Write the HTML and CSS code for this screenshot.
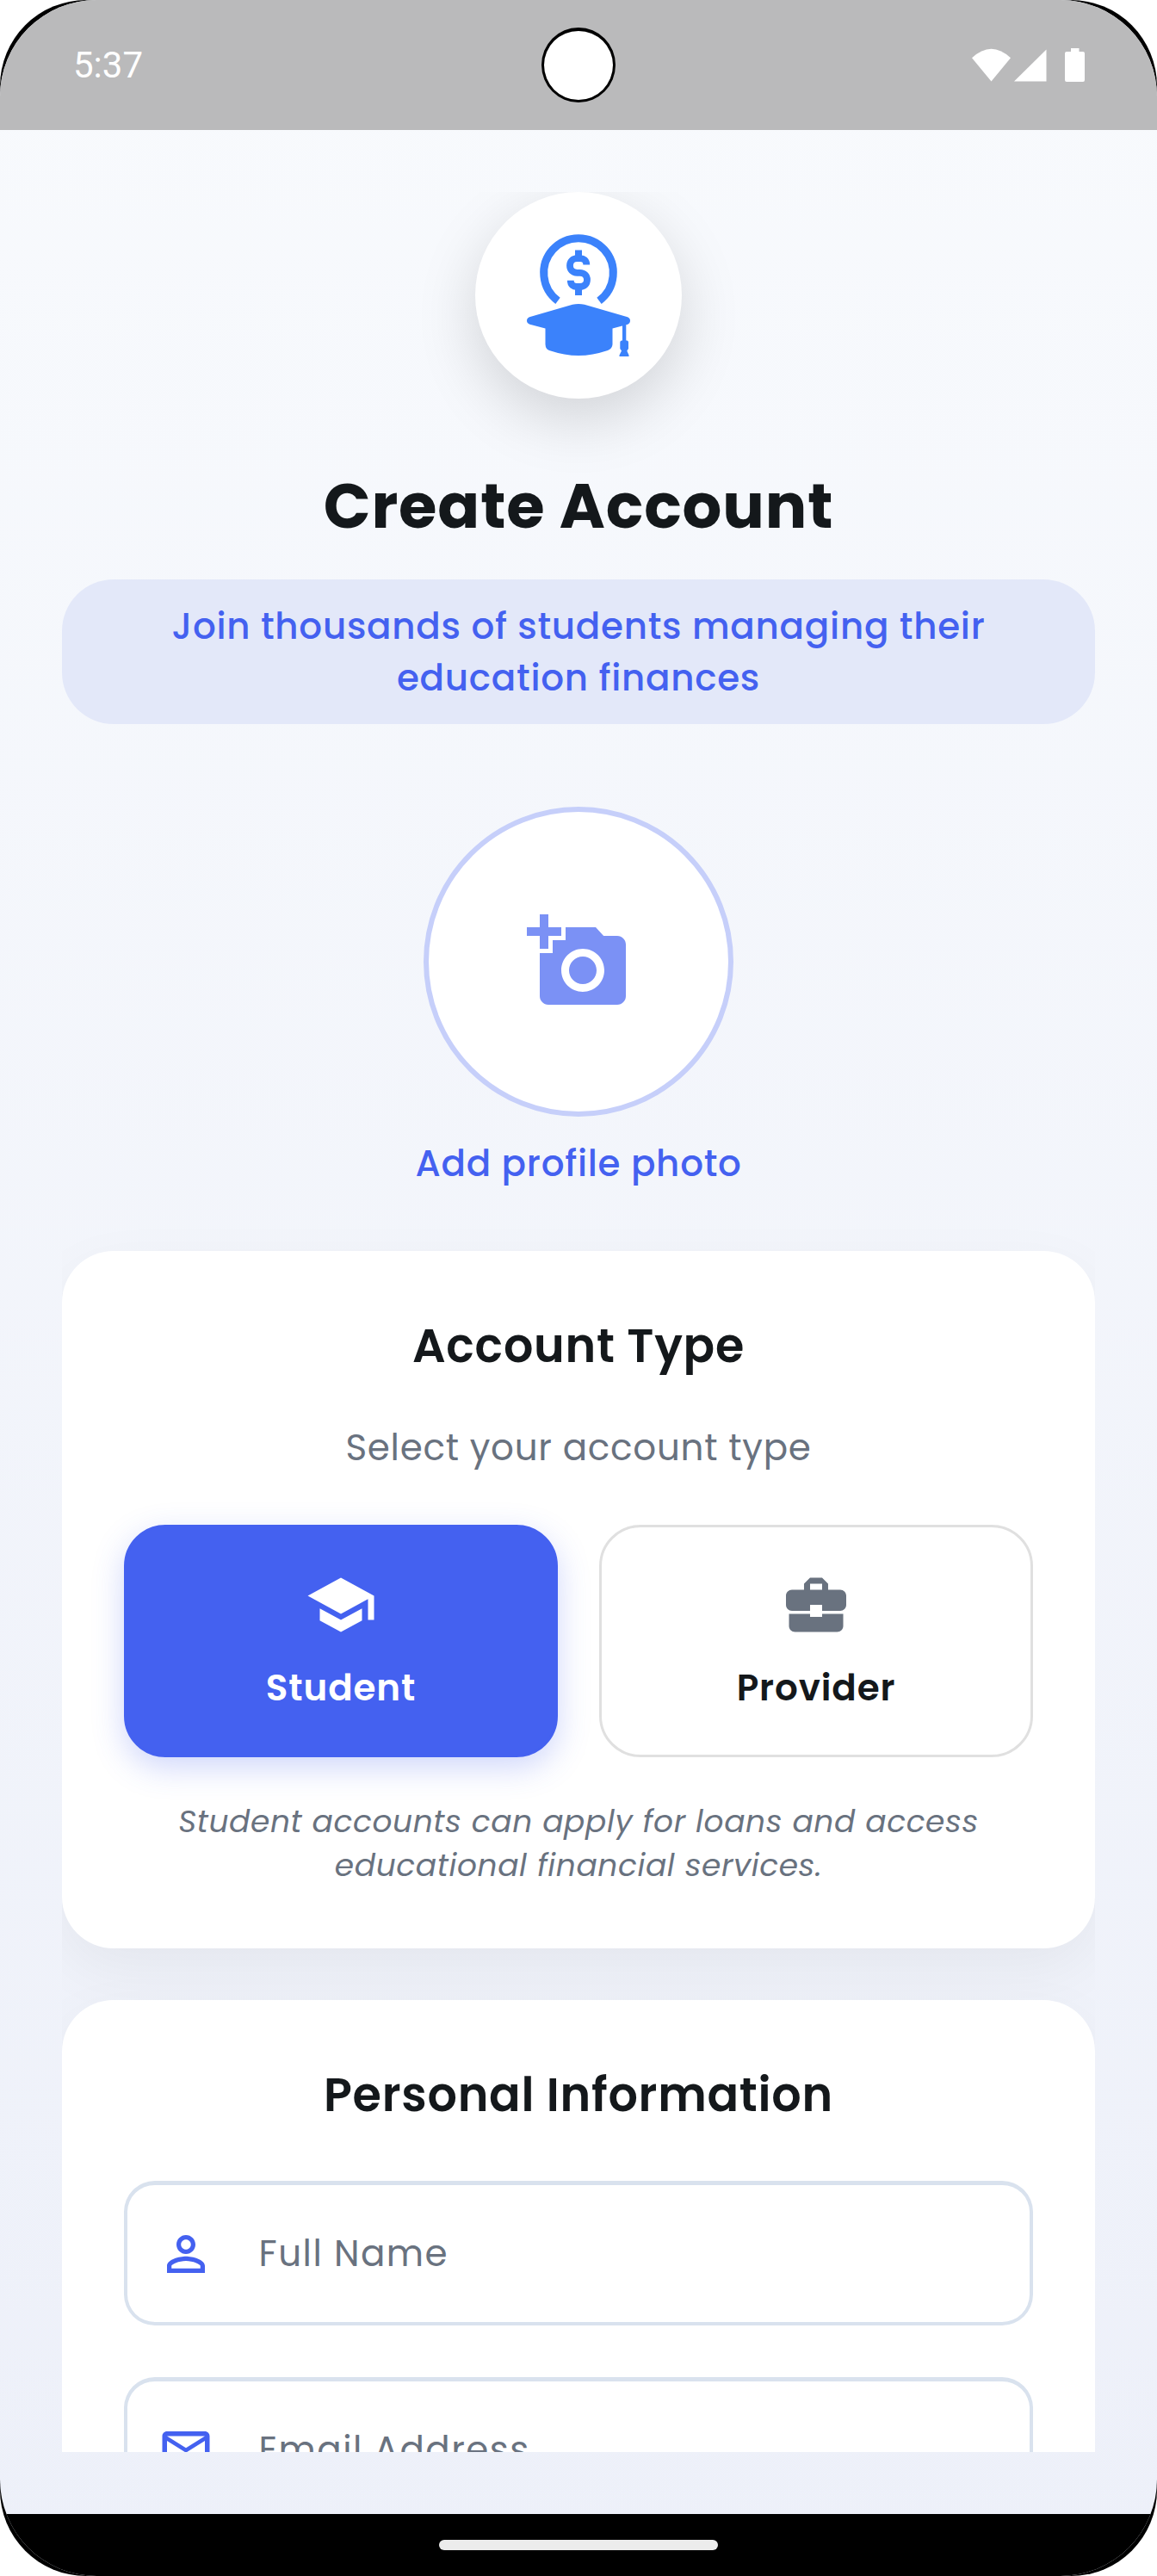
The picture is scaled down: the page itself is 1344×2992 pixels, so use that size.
FILE: index.html
```html
<!DOCTYPE html>
<html lang="en">
<head>
<meta charset="utf-8">
<title>Create Account</title>
<link rel="stylesheet" href="styles.css">
</head>
<body>
<div class="device">
  <div class="screen">
    <header class="status">
      <span class="clock">5:37</span>
      <span class="camera"></span>
      <svg class="status-icons" viewBox="0 0 132 40" fill="#fff">
        <path d="M0 11.300Q22.500-9.800 45 11.300L22.500 38.500Z"/>
        <path d="M86.500 1.500V38.500H49Z"/>
        <path d="M115 0h9.500v4h4.500a2 2 0 0 1 2 2v31a2 2 0 0 1-2 2h-19a2 2 0 0 1-2-2V6a2 2 0 0 1 2-2h5z"/>
      </svg>
    </header>
    <main class="scroller">
      <div class="logo">
        <svg viewBox="12 13 240 240" fill="none" stroke="#3b82fb">
          <path d="M108 139.300A40.300 40.300 0 1 1 156 139.300" stroke-width="9"/>
          <path d="M141.300 97.500C141.300 92.500 138 90.200 134 90.200H130.500C125 90.200 122 94 122 98.500S125 106.800 130.500 106.800H133.500C139 106.800 142 110.500 142 115S139 123 133.500 123H130C126 123 122.800 121 122.800 115.800" stroke-width="7.800"/>
          <path d="M132 80.500V90M132 123V133" stroke-width="8"/>
          <path fill="#3b82fb" stroke="none" d="M125 143.800Q132 142.200 139 143.800L189 158.300Q192 159.500 192 162.500Q192 165.800 188.500 167L171.500 171.500V190Q171.200 195 166 197Q148 203 132 203Q116 203 98 197Q93.800 195.500 93.500 190V171.500L75.500 166.800Q72 165.500 72 162.500Q72 159.500 75 158.300ZM183 166H187.300V185.500H188.500Q190 185.800 190 187.500V195L188.300 197.500L190.500 202.500V204H179.500V202.500L182 197.500L180.300 195V187.500Q180.300 185.800 182 185.500H183Z"/>
        </svg>
      </div>
      <h1 class="title">Create Account</h1>
      <p class="pill">Join thousands of students managing their<br>education finances</p>
      <div class="avatar">
        <svg viewBox="0 0 24 24" fill="#7b91f5"><path d="M3 4V1h2v3h3v2H5v3H3V6H0V4h3zm3 6V7h3V4h7l1.830 2H21c1.100 0 2 .9 2 2v12c0 1.100-.9 2-2 2H5c-1.100 0-2-.9-2-2V10h3zm7 9c2.760 0 5-2.240 5-5s-2.240-5-5-5-5 2.240-5 5 2.240 5 5 5zm-3.200-5c0 1.770 1.430 3.200 3.200 3.200s3.200-1.430 3.200-3.200-1.430-3.200-3.200-3.200-3.200 1.430-3.200 3.200z"/></svg>
      </div>
      <p class="photo-label">Add profile photo</p>

      <section class="card">
        <h2 class="card-title">Account Type</h2>
        <p class="card-sub">Select your account type</p>
        <div class="choices">
          <div class="choice selected">
            <svg viewBox="0 0 24 24" fill="#fff"><path d="M5 13.180v4L12 21l7-3.820v-4L12 17l-7-3.820zM12 3L1 9l11 6 9-4.910V17h2V9L12 3z"/></svg>
            <span>Student</span>
          </div>
          <div class="choice">
            <svg viewBox="0 0 24 24" fill="#69727f"><path d="M10 16v-1H3.010L3 19c0 1.110.89 2 2 2h14c1.110 0 2-.89 2-2v-4h-7v1h-4zm10-9h-4.010V5l-2-2h-4l-2 2v2H4c-1.100 0-2 .9-2 2v3c0 1.110.89 2 2 2h6v-2h4v2h6c1.100 0 2-.9 2-2V9c0-1.100-.9-2-2-2zm-6 0h-4V5h4v2z"/></svg>
            <span>Provider</span>
          </div>
        </div>
        <p class="note">Student accounts can apply for loans and access<br>educational financial services.</p>
      </section>

      <section class="card">
        <h2 class="card-title">Personal Information</h2>
        <div class="fields">
          <div class="field">
            <svg viewBox="0 0 24 24" fill="#4461f0"><path d="M12 5.900c1.160 0 2.100.94 2.100 2.100s-.94 2.100-2.100 2.100S9.900 9.160 9.900 8s.94-2.100 2.100-2.100m0 9c2.970 0 6.100 1.460 6.100 2.100v1.100H5.900V17c0-.64 3.130-2.100 6.100-2.100M12 4C9.790 4 8 5.790 8 8s1.790 4 4 4 4-1.790 4-4-1.790-4-4-4zm0 9c-2.670 0-8 1.340-8 4v3h16v-3c0-2.660-5.330-4-8-4z"/></svg>
            <span>Full Name</span>
          </div>
          <div class="field">
            <svg viewBox="0 0 24 24" fill="#4461f0"><path d="M22 6c0-1.100-.9-2-2-2H4c-1.100 0-2 .9-2 2v12c0 1.100.9 2 2 2h16c1.100 0 2-.9 2-2V6zm-2 0l-8 5-8-5h16zm0 12H4V8l8 5 8-5v10z"/></svg>
            <span>Email Address</span>
          </div>
        </div>
      </section>
    </main>
    <footer class="navbar"><span class="handle"></span></footer>
  </div>
</div>
</body>
</html>
```
FILE: styles.css
```css
* { box-sizing: border-box; margin: 0; padding: 0; }
body { background: #fff; font-family: Poppins, Inter, sans-serif; color: #14181b; }
svg { display: block; }
.device { width: 1344px; height: 2992px; background: #000; border-radius: 100px; overflow: hidden; }
.screen { height: 2992px; display: flex; flex-direction: column; border-radius: 112px; overflow: hidden; background: linear-gradient(#f8fafd, #edf0f9); }
.status { height: 151px; background: #bababb; display: flex; align-items: center; justify-content: space-between; padding: 0 83px 0 85px; }
.clock { font: 42px/50px Roboto, sans-serif; color: #fff; width: 130px; }
.camera { width: 86px; height: 87px; border-radius: 50%; background: #fff; border: 3px solid #000; border-top-width: 4px; }
.status-icons { width: 132px; height: 40px; }
.scroller { margin: 72px; height: 2625px; overflow: hidden; text-align: center; white-space: nowrap; }
.logo { width: 240px; height: 240px; margin: 0 auto; border-radius: 50%; background: #fff; box-shadow: 0 24px 70px rgba(0,0,0,.15); }
.title { margin: 75px 0 35px; font-size: 72px; line-height: 100px; font-weight: 700; letter-spacing: .9px; }
.pill { height: 168px; padding: 25px 0 23px; border-radius: 60px; background: #e3e8f9; color: #4461f0; font-size: 42px; line-height: 60px; font-weight: 500; letter-spacing: .75px; }
.avatar { width: 360px; height: 360px; margin: 96px auto 25px; border: 6px solid #c6cffa; border-radius: 50%; background: #fff; display: flex; align-items: center; justify-content: center; }
.avatar svg { width: 120px; height: 120px; }
.photo-label { color: #4461f0; font-size: 42px; line-height: 60px; font-weight: 500; margin-bottom: 71px; letter-spacing: .75px; }
.card { background: #fff; border-radius: 60px; padding: 72px 72px 71px; box-shadow: 0 24px 70px rgba(0,0,0,.05); margin-bottom: 60px; }
.card-title { font-size: 54px; line-height: 76px; font-weight: 600; letter-spacing: .75px; }
.card-sub { margin: 51px 0 59px; font-size: 42px; line-height: 60px; color: #69727f; letter-spacing: .75px; }
.choices { display: grid; grid-template-columns: 1fr 1fr; gap: 48px; }
.choice { height: 270px; border: 3px solid #e0e0e0; border-radius: 48px; padding-top: 48px; display: flex; flex-direction: column; align-items: center; gap: 25px; font-size: 42px; line-height: 60px; font-weight: 600; letter-spacing: .9px; }
.choice svg { width: 84px; height: 84px; }
.choice.selected { background: #4461f0; border-color: #4461f0; color: #fff; box-shadow: 0 12px 36px rgba(68,97,240,.25); }
.note { margin-top: 50px; font-size: 36px; line-height: 50.500px; font-style: italic; color: #69727f; letter-spacing: .6px; }
.fields { margin-top: 62px; display: grid; gap: 60px; }
.field { height: 168px; border: 4px solid #d9e2ee; border-top-width: 5px; border-radius: 36px; padding-left: 35px; display: flex; align-items: center; gap: 51.500px; font-size: 42px; line-height: 60px; color: #69727f; letter-spacing: 1.500px; }
.field svg { width: 66px; height: 66px; }
.navbar { height: 72px; background: #000; display: flex; justify-content: center; padding-top: 30px; }
.handle { width: 324px; height: 12px; border-radius: 6px; background: #ececec; }
```
